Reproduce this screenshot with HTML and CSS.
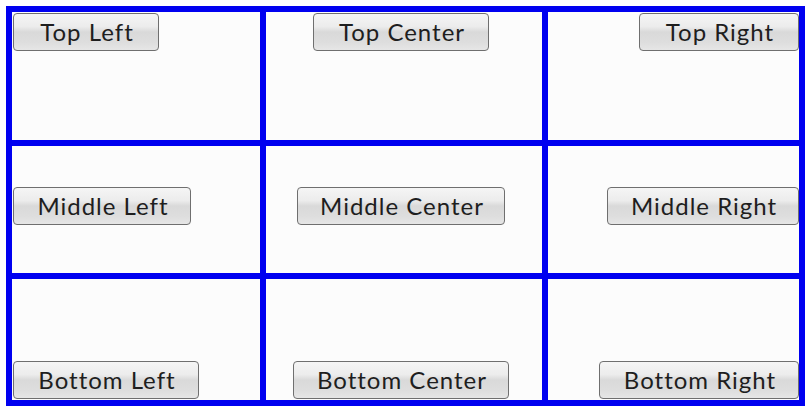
FILE: index.html
```html
<!DOCTYPE html>
<html>
<head>
<meta charset="utf-8">
<link rel="stylesheet" href="styles.css">
</head>
<body>
<div class="grid">
  <div class="cell top left"><button class="btn w-tl">Top Left</button></div>
  <div class="cell top center"><button class="btn w-tc">Top Center</button></div>
  <div class="cell top right"><button class="btn w-tr">Top Right</button></div>
  <div class="cell middle left"><button class="btn w-ml">Middle Left</button></div>
  <div class="cell middle center"><button class="btn w-mc">Middle Center</button></div>
  <div class="cell middle right"><button class="btn w-mr">Middle Right</button></div>
  <div class="cell bottom left"><button class="btn w-bl">Bottom Left</button></div>
  <div class="cell bottom center"><button class="btn w-bc">Bottom Center</button></div>
  <div class="cell bottom right"><button class="btn w-br">Bottom Right</button></div>
</div>
</body>
</html>
```

FILE: styles.css
```css
html, body {
  margin: 0;
  padding: 0;
  background: #ffffff;
}

.grid {
  margin: 6px;
  width: 799px;
  box-sizing: border-box;
  display: grid;
  grid-template-columns: 248px 276px 251px;
  grid-template-rows: 128px 127px 121px;
  gap: 6px;
  padding: 6px;
  background: #0000f0;
}

.cell {
  background: #fcfcfc;
  padding: 1px 0 1px 1px;
  display: flex;
}

.top { align-items: flex-start; }
.middle { align-items: center; padding-bottom: 8px; }
.bottom { align-items: flex-end; }
.left { justify-content: flex-start; }
.center { justify-content: center; padding-right: 7px; }
.right { justify-content: flex-end; }

.btn {
  font-family: "Lato", sans-serif;
  font-size: 24px;
  letter-spacing: 1px;
  color: #1e1e1e;
  height: 38px;
  padding: 0 0 0 2px;
  margin: 0;
  border: 1px solid #6f6f6f;
  border-radius: 4px;
  background: linear-gradient(to bottom, #f5f5f5 0%, #ececec 35%, #d9d9d9 50%, #dedede 80%, #e6e6e6 100%);
  line-height: 36px;
  white-space: nowrap;
  text-align: center;
  box-sizing: border-box;
}

.w-tl { width: 146px; }
.w-tc { width: 176px; }
.w-tr { width: 160px; }
.w-ml { width: 178px; }
.w-mc { width: 208px; }
.w-mr { width: 192px; }
.w-bl { width: 186px; }
.w-bc { width: 216px; }
.w-br { width: 200px; }
```
